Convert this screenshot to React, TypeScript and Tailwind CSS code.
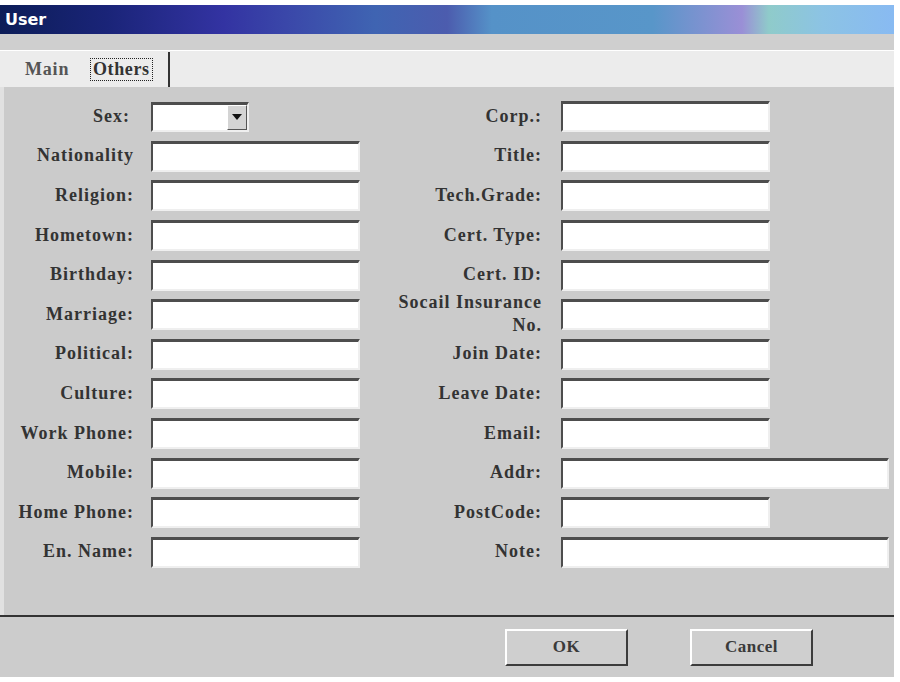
import React from "react";

const serif = { fontFamily: '"Liberation Serif", "DejaVu Serif", serif' };

const leftFields = [
  "Nationality",
  "Religion:",
  "Hometown:",
  "Birthday:",
  "Marriage:",
  "Political:",
  "Culture:",
  "Work Phone:",
  "Mobile:",
  "Home Phone:",
  "En. Name:",
];

const rightFields: { label: React.ReactNode; wide?: boolean }[] = [
  { label: "Corp.:" },
  { label: "Title:" },
  { label: "Tech.Grade:" },
  { label: "Cert. Type:" },
  { label: "Cert. ID:" },
  {
    label: (
      <span className="leading-[23px]">
        Socail Insurance
        <br />
        No.
      </span>
    ),
  },
  { label: "Join Date:" },
  { label: "Leave Date:" },
  { label: "Email:" },
  { label: "Addr:", wide: true },
  { label: "PostCode:" },
  { label: "Note:", wide: true },
];

const Sunken = ({ wide }: { wide?: boolean }) => (
  <div
    className={`h-[31px] bg-white border-t-[3px] border-l-2 border-r-2 border-b-2 border-t-[#4d4d4d] border-l-[#4d4d4d] border-r-[#efefef] border-b-[#efefef] ${
      wide ? "w-[328px]" : "w-[209px]"
    }`}
  />
);

const Label = ({ children, w }: { children: React.ReactNode; w: string }) => (
  <div
    className={`${w} shrink-0 text-right text-[18px] tracking-[1px] font-bold text-[#333] leading-none -mt-[2px]`}
    style={serif}
  >
    {children}
  </div>
);

const RaisedButton = ({ text }: { text: string }) => (
  <button
    className="w-[123px] h-[37px] bg-[#cfcfcf] border-2 border-t-white border-l-white border-r-[#3c3c3c] border-b-[#3c3c3c] text-[17px] tracking-[0.5px] font-bold text-[#3a3a3a]"
    style={serif}
  >
    {text}
  </button>
);

export default function App() {
  return (
    <div className="w-[900px] h-[682px] bg-white overflow-hidden">
      <div className="w-[894px] pt-[5px]">
        {/* title bar */}
        <div className="h-[29px] flex items-center pl-[5px] bg-[linear-gradient(to_right,#0c1d58_0%,#1a2478_12%,#3333a2_25%,#3b4aaa_33%,#3f64b2_42%,#4c5cae_50%,#5592c8_55%,#5896c9_73%,#9a8fd6_83%,#8fcbca_86%,#8cc3e4_92%,#88baf2_100%)]">
          <span
            className="text-white font-bold text-[16px]"
            style={{ fontFamily: '"DejaVu Sans", "Liberation Sans", sans-serif' }}
          >
            User
          </span>
        </div>
        <div className="h-[16px] bg-[#cfcfcf]" />

        {/* tabs */}
        <div className="h-[37px] bg-[#ececec] border-t border-white flex items-stretch">
          <div
            className="w-[82px] flex items-center pl-[25px] text-[18px] tracking-[0.8px] font-bold text-[#555]"
            style={serif}
          >
            Main
          </div>
          <div className="w-[88px] flex items-center border-r-2 border-[#333] mt-[1px]">
            <span
              className="ml-[8px] px-[2px] border border-dotted border-[#222] text-[18px] tracking-[0.6px] font-bold text-[#333] leading-[21px]"
              style={serif}
            >
              Others
            </span>
          </div>
        </div>

        {/* panel */}
        <div className="h-[528px] bg-[#cbcbcb] border-l-4 border-[#e1e1e1] pt-[10px] flex">
          <div className="flex flex-col">
            <div className="h-[39.6px] flex items-center">
              <Label w="w-[126px]">Sex:</Label>
              <div className="ml-[21px] w-[98px] h-[30px] bg-white border-t-[3px] border-l-2 border-r-2 border-b-2 border-t-[#4d4d4d] border-l-[#4d4d4d] border-r-[#efefef] border-b-[#efefef] flex justify-end">
                <div className="w-[20px] h-full bg-[#d4d4d4] border border-t-white border-l-white border-r-[#555] border-b-[#555] flex items-center justify-center">
                  <svg width="10" height="6" viewBox="0 0 10 6">
                    <path d="M0 0 H10 L5 6 Z" fill="#111" />
                  </svg>
                </div>
              </div>
            </div>
            {leftFields.map((l) => (
              <div key={l} className="h-[39.6px] flex items-center">
                <Label w="w-[130px]">{l}</Label>
                <div className="ml-[17px]">
                  <Sunken />
                </div>
              </div>
            ))}
          </div>
          <div className="flex flex-col">
            {rightFields.map((f, i) => (
              <div key={i} className="h-[39.6px] flex items-center">
                <Label w="w-[182px]">{f.label}</Label>
                <div className="ml-[19px]">
                  <Sunken wide={f.wide} />
                </div>
              </div>
            ))}
          </div>
        </div>

        <div className="h-[2px] bg-[#333]" />

        {/* footer */}
        <div className="h-[60px] bg-[#cccccc] flex items-center pl-[505px] gap-[62px]">
          <RaisedButton text="OK" />
          <RaisedButton text="Cancel" />
        </div>
      </div>
    </div>
  );
}
